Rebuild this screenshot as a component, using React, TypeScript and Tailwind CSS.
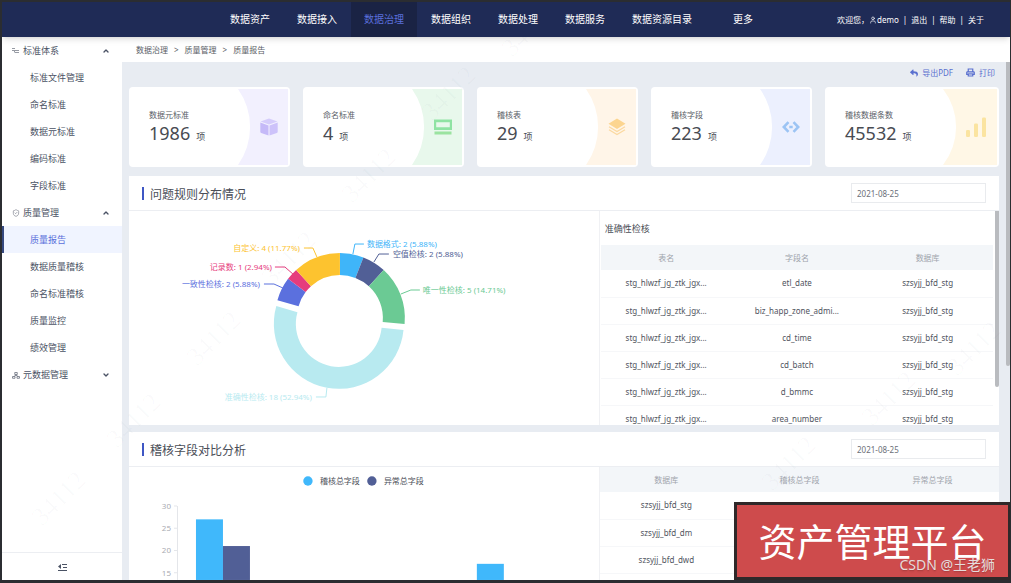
import type { ReactNode } from 'react';
import { ChevronDown, ChevronUp, ShieldCheck, User } from 'lucide-react';
import { FaReply } from 'react-icons/fa';

const NAV_ITEMS = ['数据资产', '数据接入', '数据治理', '数据组织', '数据处理', '数据服务', '数据资源目录', '更多'];

const STANDARD_MENU = ['标准文件管理', '命名标准', '数据元标准', '编码标准', '字段标准'];
const QUALITY_MENU = ['质量报告', '数据质量稽核', '命名标准稽核', '质量监控', '绩效管理'];

const RULE_ROWS = ['etl_date', 'biz_happ_zone_admi...', 'cd_time', 'cd_batch', 'd_bmmc', 'area_number'];
const DB_ROWS = [
    ['szsyjj_bfd_stg', '', ''],
    ['szsyjj_bfd_dm', '', ''],
    ['szsyjj_bfd_dwd', '', ''],
];

function CubeIcon() {
    return (
        <svg width="18" height="18" viewBox="0 0 18 18">
            <path d="M9 0.5 17.5 3.4 9 6.4 0.5 3.4z" fill="#d5ccfb" />
            <path d="M0.3 4.5 8.5 7.4V17.5L1.2 15Q0.3 14.6 0.3 13.8z" fill="#c5b9f8" />
            <path d="M17.7 4.5 9.5 7.4V17.5L16.8 15Q17.7 14.6 17.7 13.8z" fill="#cdc2fa" />
        </svg>
    );
}

function ScreenIcon() {
    return (
        <svg width="18" height="18" viewBox="0 0 18 18">
            <path d="M0 1.5h18v10.5H0zM2.2 4.2v5h13.6v-5z" fill="#8fe3a3" fillRule="evenodd" />
            <path d="M0.5 13.5h17v3h-17z" fill="#9be3a0" />
        </svg>
    );
}

function LayersIcon() {
    return (
        <svg width="18" height="18" viewBox="0 0 18 18">
            <path d="M9 0.5 17.5 5.8 9 11 0.5 5.8z" fill="#fcd590" />
            <path d="M1 8.8 9 13.5 17 8.8M1 11.8 9 16.6 17 11.8" fill="none" stroke="#fbd9a0" strokeWidth="1.3" />
        </svg>
    );
}

function CodeIcon() {
    return (
        <svg width="18" height="18" viewBox="0 0 18 18" fill="none" stroke="#9cc4f4" strokeWidth="2.6">
            <path d="M6.5 4.2 1.8 9l4.7 4.800M11.500 4.200l4.700 4.800-4.700 4.800M7.300 9h3.400" />
        </svg>
    );
}

function BarsIcon() {
    return (
        <svg width="20" height="20" viewBox="0 0 20 20" fill="#fbe4a0">
            <rect x="0" y="13" width="4" height="7" rx="1.2" />
            <rect x="8" y="6.5" width="4" height="13.5" rx="1.2" />
            <rect x="16" y="0.5" width="4" height="19.5" rx="1.2" />
        </svg>
    );
}

function PrintIcon() {
    return (
        <svg width="9" height="9" viewBox="0 0 18 18" fill="none" stroke="currentColor" strokeWidth="2.400">
            <path d="M4.500 8V2h9v6" />
            <path d="M1.500 13V9q0-1.500 1.500-1.500h12q1.500 0 1.500 1.500v4z" fill="currentColor" fillOpacity="0.35" />
            <path d="M4.500 12h9v4h-9z" fill="#e8ecf2" />
        </svg>
    );
}

interface Stat {
    label: string;
    value: string;
    tint: string;
    icon: ReactNode;
}

const STATS: Stat[] = [
    { label: '数据元标准', value: '1986', tint: '#f2f0fe', icon: <CubeIcon /> },
    { label: '命名标准', value: '4', tint: '#e8f8ec', icon: <ScreenIcon /> },
    { label: '稽核表', value: '29', tint: '#fff5e8', icon: <LayersIcon /> },
    { label: '稽核字段', value: '223', tint: '#ecf0fe', icon: <CodeIcon /> },
    { label: '稽核数据条数', value: '45532', tint: '#fff7e6', icon: <BarsIcon /> },
];

function StatCard({ label, value, tint, icon }: Stat) {
    return (
        <div className="mr-[13px] flex h-20 justify-between rounded-sm bg-white p-0.5 last:mr-0">
            <div className="flex flex-col justify-center pl-[18px]">
                <span className="text-[8px] leading-3 text-[#5a5e66]">{label}</span>
                <span className="flex items-baseline gap-1.5 text-[#484b52]">
                    <b className="text-[18px] leading-6 font-normal">{value}</b>
                    <span className="text-[9px] leading-3">项</span>
                </span>
            </div>
            <div className="relative flex w-[32%] items-center justify-center pl-3">
                <svg className="absolute inset-0 h-full w-full" viewBox="0 0 50 76" preserveAspectRatio="none">
                    <path d="M0 0A66 66 0 0 1 0 76H50V0z" fill={tint} />
                </svg>
                <span className="relative">{icon}</span>
            </div>
        </div>
    );
}

interface MenuGroupProps {
    title: string;
    icon: ReactNode;
    items?: string[];
    active?: string;
}

function MenuGroup({ title, icon, items = [], active }: MenuGroupProps) {
    const open = items.length > 0;
    return (
        <div>
            <button type="button" aria-expanded={open} className="flex h-[27px] w-full items-center pr-3 pl-[10px] text-[#4a5264]">
                <span className="flex w-[11px] shrink-0 text-[#7b808c]">{icon}</span>
                <span>{title}</span>
                <span className="ml-auto">{open ? <ChevronUp size={8} strokeWidth={4} /> : <ChevronDown size={8} strokeWidth={4} />}</span>
            </button>
            {items.map((item) => (
                <a
                    key={item}
                    href="#"
                    className={
                        item === active
                            ? 'flex h-[27px] items-center border-l-2 border-[#36497f] bg-[#f0f4ff] pl-[26px] text-[#5a6fdb]'
                            : 'flex h-[27px] items-center pl-7 text-[#4a5264]'
                    }
                >
                    {item}
                </a>
            ))}
        </div>
    );
}

function PanelHeader({ title, id }: { title: string; id: string }) {
    return (
        <div className="flex h-[35px] items-center border-b border-[#eceef2] pr-[13px] pl-[13px]">
            <span className="mr-1.5 h-[13px] w-0.5 bg-[#3f57c4]" />
            <h2 className="self-end text-[12px] leading-[30px] text-[#4a4e58]">{title}</h2>
            <input
                id={id}
                type="text"
                aria-label="日期"
                defaultValue="2021-08-25"
                className="ml-auto h-5 w-[135px] border border-[#e9ebee] px-[5px] text-[8px] text-[#6b6f78]"
            />
        </div>
    );
}

// 环形图: 角度从 12 点钟方向顺时针
const CX = 211;
const CY = 107;
const R_OUT = 65;
const R_IN = 43;

const SLICES = [
    { name: '数据格式', count: 2, pct: '5.88', color: '#3fb5f9', line: '224,43 226,33 235,33', x: 238, y: 36, anchor: 'start' },
    { name: '空值检核', count: 2, pct: '5.88', color: '#515f96', line: '245,51 250,43 260,43', x: 264, y: 46, anchor: 'start' },
    { name: '唯一性检核', count: 5, pct: '14.71', color: '#6bca94', line: '272,83 282,79 291,79', x: 294, y: 82, anchor: 'start' },
    { name: '准确性检核', count: 18, pct: '52.94', color: '#b8eaf0', line: '198,177 197,186 187,186', x: 183, y: 189, anchor: 'end' },
    { name: '一致性检核', count: 2, pct: '5.88', color: '#5b70de', line: '154,77 145,73 135,73', x: 131, y: 76, anchor: 'end' },
    { name: '记录数', count: 1, pct: '2.94', color: '#e63c7d', line: '164,63 156,56 146,56', x: 143, y: 59, anchor: 'end' },
    { name: '自定义', count: 4, pct: '11.77', color: '#fdc32f', line: '188,46 184,37 175,37', x: 171, y: 40, anchor: 'end' },
] as const;

function slicePath(from: number, to: number, shift: number) {
    const mid = (from + to) / 2;
    const cx = CX + Math.sin(mid) * shift;
    const cy = CY - Math.cos(mid) * shift;
    const large = to - from > Math.PI ? 1 : 0;
    const pt = (r: number, a: number) => `${(cx + Math.sin(a) * r).toFixed(2)} ${(cy - Math.cos(a) * r).toFixed(2)}`;
    return `M${pt(R_OUT, from)}A${R_OUT} ${R_OUT} 0 ${large} 1 ${pt(R_OUT, to)}L${pt(R_IN, to)}A${R_IN} ${R_IN} 0 ${large} 0 ${pt(R_IN, from)}z`;
}

function DonutChart() {
    const total = SLICES.reduce((sum, s) => sum + s.count, 0);
    let acc = 0;
    return (
        <svg className="h-[214px] w-full" viewBox="0 0 470 214" fontSize="8">
            {SLICES.map((s) => {
                const from = (acc / total) * Math.PI * 2;
                acc += s.count;
                const to = (acc / total) * Math.PI * 2;
                return (
                    <g key={s.name}>
                        <path d={slicePath(from, to, s.count === 18 ? 6 : 0)} fill={s.color} />
                        <polyline points={s.line} fill="none" stroke={s.color} />
                        <text x={s.x} y={s.y} textAnchor={s.anchor} fill={s.color}>
                            {`${s.name}: ${s.count} (${s.pct}%)`}
                        </text>
                    </g>
                );
            })}
        </svg>
    );
}

const TICKS = [30, 25, 20, 15];
const BARS = [
    { x: 67, value: 27, color: '#40b8fb' },
    { x: 94, value: 21, color: '#515f96' },
    { x: 348, value: 17, color: '#40b8fb' },
];

function BarChart() {
    const yOf = (v: number) => 39 + (30 - v) * 4.45;
    return (
        <svg className="h-[113px] w-full" viewBox="0 0 470 113" fontSize="8">
            <circle cx="179" cy="14" r="4.7" fill="#40b8fb" />
            <text x="191" y="17" fill="#4a4e58">稽核总字段</text>
            <circle cx="243" cy="14" r="4.7" fill="#515f96" />
            <text x="255" y="17" fill="#4a4e58">异常总字段</text>
            <path d="M48.5 39V113" stroke="#e4e6ea" />
            {TICKS.map((t) => (
                <g key={t}>
                    <path d={`M45 ${yOf(t)}h3`} stroke="#e4e6ea" />
                    <text x="42" y={yOf(t) + 3} textAnchor="end" fill="#a9abb2">{t}</text>
                </g>
            ))}
            {BARS.map((b) => (
                <rect key={b.x} x={b.x} y={yOf(b.value)} width="27" height={113 - yOf(b.value)} fill={b.color} />
            ))}
        </svg>
    );
}

function DataTable({ head, rows }: { head: string[]; rows: string[][] }) {
    return (
        <table className="w-full table-fixed text-center text-[8px] text-[#50545e]">
            <thead>
                <tr className="h-[25px] bg-[#f3f6f9] text-[#a0a4ac]">
                    {head.map((h) => (
                        <th key={h} className="font-normal">{h}</th>
                    ))}
                </tr>
            </thead>
            <tbody>
                {rows.map((row, i) => (
                    <tr key={i} className="h-[27px] border-b border-[#f6f7f9]">
                        {row.map((cell, j) => (
                            <td key={j}>{cell}</td>
                        ))}
                    </tr>
                ))}
            </tbody>
        </table>
    );
}

const MARKS = [
    [40, 525], [115, 447], [195, 365], [270, 285], [350, 202], [430, 120], [510, 56],
    [770, 490], [870, 425], [955, 375],
];

function Watermark() {
    return (
        <svg aria-hidden className="pointer-events-none absolute inset-0 h-full w-full font-['Liberation_Serif',serif]" fontSize="26" fill="#64708a" fillOpacity="0.03">
            {MARKS.map(([x, y]) => (
                <text key={x} transform={`translate(${x} ${y}) rotate(-45)`}>34112</text>
            ))}
        </svg>
    );
}

export default function App() {
    return (
        <div className="relative flex h-screen flex-col overflow-hidden border-t-2 border-r border-b-[3px] border-l-2 border-[#2b2d31] bg-[#e8ecf2] font-['Noto_Sans','Noto_Sans_CJK_SC',sans-serif]">
            <header className="relative z-10 flex h-[35px] shrink-0 items-stretch bg-[#1f2b56] pr-[26px] pl-[215px] text-white shadow-md">
                <nav className="flex gap-px text-[10px]">
                    {NAV_ITEMS.map((item) => (
                        <a
                            key={item}
                            href="#"
                            className={
                                item === '数据治理'
                                    ? 'flex items-center bg-[#1a2344] px-[13px] text-[#5a70dc]'
                                    : 'flex items-center px-[13px] last:pl-[27px]'
                            }
                        >
                            {item}
                        </a>
                    ))}
                </nav>
                <div className="ml-auto flex items-center gap-1 text-[8px]">
                    <span className="flex items-center">
                        欢迎您，<User size={8} strokeWidth={2} />demo
                    </span>
                    <span>|</span>
                    <a href="#">退出</a>
                    <span>|</span>
                    <a href="#">帮助</a>
                    <span>|</span>
                    <a href="#">关于</a>
                </div>
            </header>

            <div className="flex min-h-0 flex-1">
                <aside className="flex w-[120px] shrink-0 flex-col bg-white text-[9px]">
                    <MenuGroup
                        title="标准体系"
                        icon={
                            <svg width="7" height="7" viewBox="0 0 14 14" fill="none" stroke="currentColor" strokeWidth="1.6">
                                <path d="M0 3h6M0 7h5v4M5 7h9M6 11h8" />
                            </svg>
                        }
                        items={STANDARD_MENU}
                    />
                    <MenuGroup title="质量管理" icon={<ShieldCheck size={8} />} items={QUALITY_MENU} active="质量报告" />
                    <MenuGroup
                        title="元数据管理"
                        icon={
                            <svg width="8" height="8" viewBox="0 0 16 16" fill="none" stroke="currentColor" strokeWidth="1.800">
                                <path d="M5.500 3h5v4h-5zM1 11h5v3.500H1zM10 11h5v3.500h-5zM8 7v2M3.500 11 8 8.500l4.500 2.500" />
                            </svg>
                        }
                    />
                    <button type="button" aria-label="收起菜单" className="mt-auto flex h-7 items-center justify-center border-t border-[#eceef2] text-[#4a5264]">
                        <svg width="9" height="8" viewBox="0 0 9 8" fill="none" stroke="currentColor">
                            <path d="M4 1.500h5M5 4.500h4M0 7.500h9" />
                            <path d="M3 1v5L0 3.500z" fill="currentColor" stroke="none" />
                        </svg>
                    </button>
                </aside>

                <div className="flex min-w-0 flex-1 flex-col">
                    <div className="flex h-[25px] shrink-0 items-center gap-1.5 bg-white pl-[14px] text-[8px] text-[#5a5e66]">
                        <a href="#">数据治理</a>
                        <span>&gt;</span>
                        <a href="#">质量管理</a>
                        <span>&gt;</span>
                        <span>质量报告</span>
                    </div>

                    <main className="relative min-h-0 flex-1 overflow-hidden pr-[11px] pl-[7px]">
                        <span className="absolute top-0 right-0 h-[304px] w-1 rounded-b-sm bg-[#b9bbbf]" />
                        <div className="flex h-[25px] items-center justify-end gap-[13px] pr-1 pb-1 text-[8px] text-[#5a70cf]">
                            <button type="button" className="flex items-center gap-1">
                                <FaReply size={8} />
                                导出PDF
                            </button>
                            <button type="button" className="flex items-center gap-1">
                                <PrintIcon />
                                打印
                            </button>
                        </div>

                        <div className="mb-[9px] grid grid-cols-5">
                            {STATS.map((s) => (
                                <StatCard key={s.label} {...s} />
                            ))}
                        </div>

                        <section className="mb-[7px] bg-white">
                            <PanelHeader title="问题规则分布情况" id="rule-date" />
                            <div className="flex h-[214px]">
                                <div className="w-[54%]">
                                    <DonutChart />
                                </div>
                                <div className="flex flex-1 items-start overflow-hidden border-l border-[#f0f1f4] pl-px">
                                    <div className="flex-1">
                                        <h3 className="h-[34px] pl-1 text-[9px] leading-[36px] text-[#4a4e58]">准确性检核</h3>
                                        <DataTable
                                            head={['表名', '字段名', '数据库']}
                                            rows={RULE_ROWS.map((f) => ['stg_hlwzf_jg_ztk_jgx...', f, 'szsyjj_bfd_stg'])}
                                        />
                                    </div>
                                    <span className="ml-0.5 h-[176px] w-1 rounded-b-sm bg-[#b9bbbf]" />
                                </div>
                            </div>
                        </section>

                        <section className="bg-white">
                            <PanelHeader title="稽核字段对比分析" id="field-date" />
                            <div className="flex">
                                <div className="w-[54%]">
                                    <BarChart />
                                </div>
                                <div className="flex-1 border-l border-[#f0f1f4]">
                                    <DataTable head={['数据库', '稽核总字段', '异常总字段']} rows={DB_ROWS} />
                                </div>
                            </div>
                        </section>
                    </main>
                </div>
            </div>

            <Watermark />

            <div className="absolute right-0 bottom-0 z-20 flex h-[78px] w-[276px] items-center justify-center border-[3px] border-r-2 border-[#2f2829] bg-[#ce4b4c] text-[38px] leading-none text-white">
                资产管理平台
                <span className="absolute right-[13px] bottom-0.5 text-[14px] leading-5 text-[#e6dcdc] text-shadow-sm">CSDN @王老狮</span>
            </div>
        </div>
    );
}
